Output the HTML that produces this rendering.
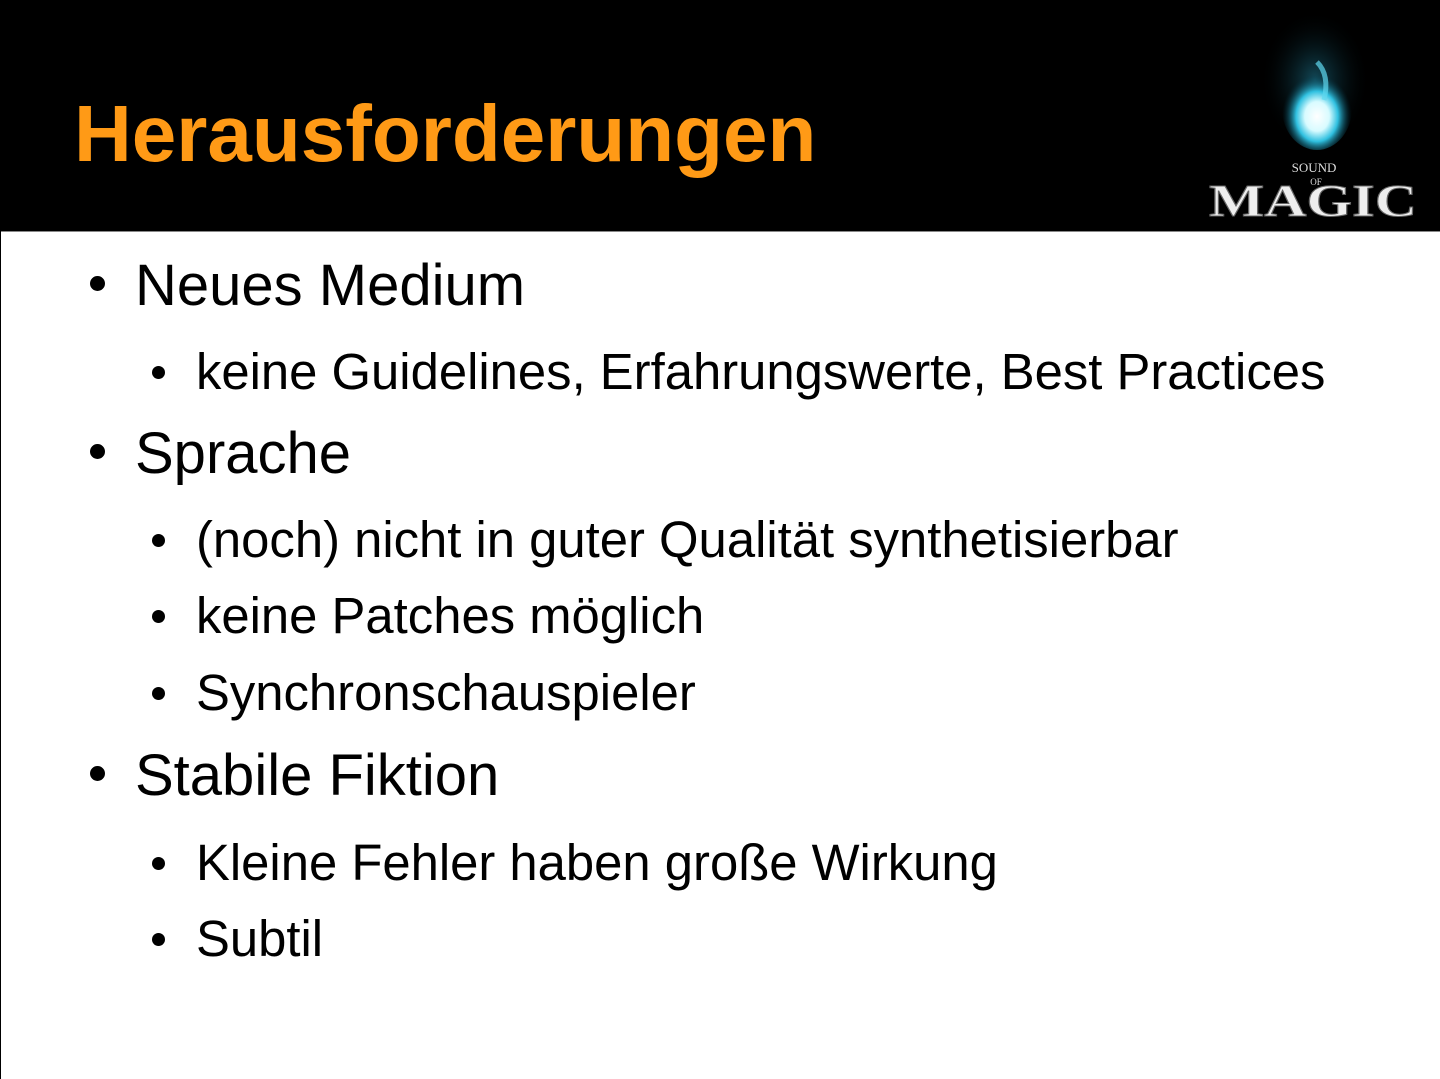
<!DOCTYPE html>
<html><head><meta charset="utf-8"><style>
html,body{margin:0;padding:0}
body{width:1440px;height:1079px;position:relative;background:#fff;overflow:hidden;font-family:"Liberation Sans",sans-serif;color:#000}
.hdr{position:absolute;left:0;top:0;width:1440px;height:231px;background:#000;border-bottom:1px solid #888}
.edge{position:absolute;left:0;top:231px;width:1px;height:848px;background:#000}
.t{position:absolute;white-space:nowrap;line-height:1}
.title{left:74px;top:94px;font-size:80px;font-weight:bold;color:#ff9a16}
.l1{font-size:58px;left:135px}
.l2{font-size:50.8px;left:196px}
.b{position:absolute;border-radius:50%;background:#000}
</style></head><body>
<div class="hdr"></div>
<div class="edge"></div>
<div class="t title">Herausforderungen</div>
<svg style="position:absolute;left:1200px;top:0" width="240" height="231">
<defs>
<radialGradient id="g" cx="50%" cy="60%" r="50%"><stop offset="0" stop-color="#fff"/><stop offset="0.35" stop-color="#d8fbff"/><stop offset="0.6" stop-color="#2fc0e0"/><stop offset="1" stop-color="#003040" stop-opacity="0"/></radialGradient>
<radialGradient id="h" cx="50%" cy="50%" r="50%"><stop offset="0" stop-color="#1a6a80" stop-opacity="0.7"/><stop offset="1" stop-color="#000" stop-opacity="0"/></radialGradient>
</defs>
<ellipse cx="115" cy="80" rx="55" ry="70" fill="url(#h)"/>
<ellipse cx="117" cy="108" rx="35" ry="42" fill="url(#g)"/>
<path d="M117 62 Q130 75 124 100" stroke="#5fd8f0" stroke-width="5" fill="none" opacity="0.7"/>
<text x="114" y="172" font-family="Liberation Serif,serif" font-size="13" fill="#ddd" text-anchor="middle">SOUND</text>
<text x="116" y="185" font-family="Liberation Serif,serif" font-size="9" fill="#ddd" text-anchor="middle">OF</text>
<text x="113" y="216" font-family="Liberation Serif,serif" font-size="46" font-weight="bold" fill="#eee" stroke="#666" stroke-width="1" text-anchor="middle" textLength="208" lengthAdjust="spacingAndGlyphs">MAGIC</text>
</svg>

<div class="b" style="left:90px;top:276px;width:15px;height:15px"></div>
<div class="t l1" style="top:257px">Neues Medium</div>
<div class="b" style="left:152px;top:366px;width:13px;height:13px"></div>
<div class="t l2" style="top:347px">keine Guidelines, Erfahrungswerte, Best Practices</div>
<div class="b" style="left:90px;top:444px;width:15px;height:15px"></div>
<div class="t l1" style="top:425px">Sprache</div>
<div class="b" style="left:152px;top:534px;width:13px;height:13px"></div>
<div class="t l2" style="top:515px">(noch) nicht in guter Qualität synthetisierbar</div>
<div class="b" style="left:152px;top:610px;width:13px;height:13px"></div>
<div class="t l2" style="top:591px">keine Patches möglich</div>
<div class="b" style="left:152px;top:687px;width:13px;height:13px"></div>
<div class="t l2" style="top:668px">Synchronschauspieler</div>
<div class="b" style="left:90px;top:766px;width:15px;height:15px"></div>
<div class="t l1" style="top:747px">Stabile Fiktion</div>
<div class="b" style="left:152px;top:857px;width:13px;height:13px"></div>
<div class="t l2" style="top:838px">Kleine Fehler haben große Wirkung</div>
<div class="b" style="left:152px;top:933px;width:13px;height:13px"></div>
<div class="t l2" style="top:914px">Subtil</div>
</body></html>
